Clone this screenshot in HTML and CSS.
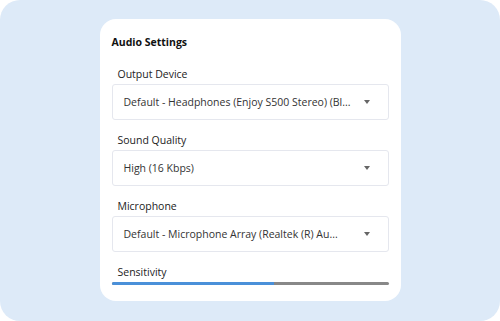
FILE: index.html
```html
<!DOCTYPE html>
<html>
<head>
<meta charset="utf-8">
<link rel="stylesheet" href="styles.css">
</head>
<body>
<div class="stage">
  <div class="card">
    <div class="title">Audio Settings</div>
    <div class="group">
      <div class="label">Output Device</div>
      <div class="select"><span class="value">Default - Headphones (Enjoy S500 Stereo) (Bl...</span><span class="arrow"></span></div>
    </div>
    <div class="group">
      <div class="label">Sound Quality</div>
      <div class="select"><span class="value">High (16 Kbps)</span><span class="arrow"></span></div>
    </div>
    <div class="group">
      <div class="label">Microphone</div>
      <div class="select"><span class="value">Default - Microphone Array (Realtek (R) Au...</span><span class="arrow"></span></div>
    </div>
    <div class="group">
      <div class="label">Sensitivity</div>
      <div class="slider"><div class="fill" style="width:58.5%"></div></div>
    </div>
  </div>
</div>
</body>
</html>
```
FILE: styles.css
```css
html, body { margin: 0; padding: 0; background: #fff; }
body { font-family: "Open Sans", "Noto Sans", sans-serif; color: #222; }
.stage {
  width: 500px; height: 321px;
  background: #ddeaf8;
  border-radius: 20px;
  display: flex; align-items: flex-start; justify-content: center;
  box-sizing: border-box; padding-top: 19px;
}
.card {
  width: 301px; box-sizing: border-box;
  background: #fff; border-radius: 16px;
  padding: 15px 12px 16px 12px;
}
.title { font-size: 10.5px; font-weight: 700; line-height: 16px; color: #111; margin-bottom: 16px; }
.group { margin-top: 12px; }
.label { font-size: 10.5px; line-height: 16px; padding-left: 6px; margin-bottom: 2px; color: #222; }
.select {
  height: 36px; box-sizing: border-box;
  border: 1px solid #e5e7ee; border-radius: 3px;
  display: flex; align-items: center; justify-content: space-between;
  padding: 0 18px 0 11px;
  font-size: 10.5px; color: #333;
}
.arrow {
  width: 0; height: 0;
  border-left: 3.5px solid transparent; border-right: 3.5px solid transparent;
  border-top: 4px solid #666;
}
.slider { height: 3px; background: #888; border-radius: 2px; overflow: hidden; }
.fill { height: 100%; background: #4a90d9; }
```
